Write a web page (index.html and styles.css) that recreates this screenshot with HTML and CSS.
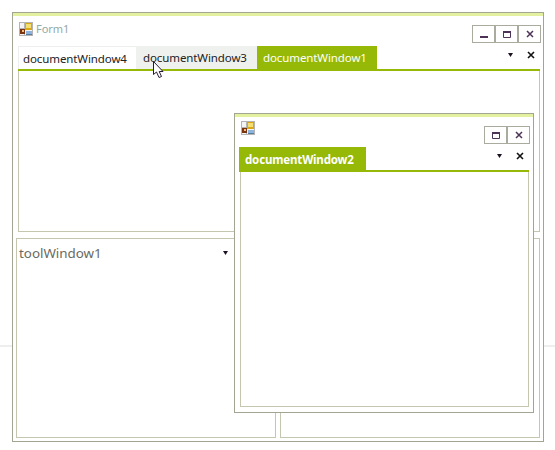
FILE: index.html
```html
<!DOCTYPE html>
<html lang="en">
<head>
<meta charset="utf-8">
<title>Form1</title>
<link rel="stylesheet" href="styles.css">
</head>
<body>
<svg width="0" height="0" class="defs">
  <defs>
    <symbol id="app" viewBox="0 0 14 14">
      <rect x="0" y="0" width="14" height="14" fill="#b4b4b4"/>
      <rect x="1" y="1" width="12" height="12" fill="#f4f4f4"/>
      <rect x="0" y="6" width="6" height="1" fill="#b4b4b4"/>
      <rect x="5" y="0" width="1" height="7" fill="#b4b4b4"/>
      <rect x="5" y="8" width="1" height="6" fill="#b4b4b4"/>
      <rect x="6" y="1" width="7" height="7" fill="#d8a818"/>
      <rect x="7" y="2" width="5" height="4" fill="#f4e070"/>
      <rect x="1" y="7" width="5" height="5" fill="#7a3410"/>
      <rect x="3" y="8" width="2" height="2" fill="#f0c080"/>
      <rect x="7" y="9" width="6" height="4" fill="#8db4dc"/>
      <rect x="7" y="12" width="6" height="1" fill="#5b7ba0"/>
    </symbol>
    <symbol id="down" viewBox="0 0 5 4"><path d="M0 0H5L2.5 4Z" fill="#1c1224"/></symbol>
    <symbol id="close" viewBox="0 0 8 8"><path d="M1 1L7 7M7 1L1 7" stroke="#111" stroke-width="1.6" fill="none"/></symbol>
    <symbol id="wclose" viewBox="0 0 8 8"><path d="M1 1L7 7M7 1L1 7" stroke="#4d3356" stroke-width="1.5" fill="none"/></symbol>
    <symbol id="wmax" viewBox="0 0 8 7"><path d="M.5 .5H7.5V6.5H.5Z" stroke="#4d3356" fill="none"/><rect width="8" height="2" fill="#4d3356"/></symbol>
    <symbol id="wmin" viewBox="0 0 8 2"><rect width="8" height="2" fill="#4d3356"/></symbol>
  </defs>
</svg>
<div class="page-line"></div>
<main class="form">
  <div class="strip"></div>
  <header class="titlebar">
    <div class="title">
      <svg class="app-icon"><use href="#app"/></svg>
      <span class="title-text">Form1</span>
    </div>
    <div class="winbtns">
      <button class="winbtn"><svg class="i-min"><use href="#wmin"/></svg></button>
      <button class="winbtn"><svg class="i-max"><use href="#wmax"/></svg></button>
      <button class="winbtn"><svg class="i-close"><use href="#wclose"/></svg></button>
    </div>
  </header>

  <section class="docs">
    <div class="tabstrip">
      <div class="tab tab-first">documentWindow4</div>
      <div class="tab tab-hover">documentWindow3</div>
      <div class="tab tab-active">documentWindow1</div>
      <div class="strip-tools">
        <svg class="i-down"><use href="#down"/></svg>
        <svg class="i-x"><use href="#close"/></svg>
      </div>
    </div>
    <div class="doc-body"></div>
  </section>

  <div class="tools">
    <section class="tool">
      <div class="tool-head">
        <span>toolWindow1</span>
        <svg class="i-down"><use href="#down"/></svg>
      </div>
    </section>
    <section class="tool"></section>
  </div>

  <section class="float">
    <div class="strip"></div>
    <header class="titlebar float-bar">
      <svg class="app-icon"><use href="#app"/></svg>
      <div class="winbtns">
        <button class="winbtn"><svg class="i-max"><use href="#wmax"/></svg></button>
        <button class="winbtn"><svg class="i-close"><use href="#wclose"/></svg></button>
      </div>
    </header>
    <div class="tabstrip float-strip">
      <div class="tab tab-active tab-bold">documentWindow2</div>
      <div class="strip-tools">
        <svg class="i-down"><use href="#down"/></svg>
        <svg class="i-x"><use href="#close"/></svg>
      </div>
    </div>
    <div class="doc-body float-body"></div>
  </section>
</main>
<svg class="cursor" viewBox="0 0 13 18" width="13" height="18">
  <path d="M.5 .5V13.5L3.5 11L6 16.5L8.5 15.5L6.2 10.5H10Z" fill="#fff" stroke="#2a1a3a" stroke-width="1"/>
</svg>
</body>
</html>
```

FILE: styles.css
```css
* { box-sizing: border-box; }
html, body { margin: 0; height: 450px; background: #fff; overflow: hidden; }
body {
  position: relative;
  padding: 12px 0 0 12px;
  font-family: "Noto Sans", "Open Sans", sans-serif;
}
.defs { position: absolute; }
.page-line { position: absolute; left: 0; right: 0; top: 345px; height: 2px; background: #eeeeee; }

.form {
  position: relative;
  width: 532px;
  height: 430px;
  border: 1px solid #a3a593;
  background: #fff;
  display: flex;
  flex-direction: column;
}
.strip { height: 3px; background: #e2f0a0; flex: none; }

.titlebar {
  height: 30px;
  display: flex;
  justify-content: space-between;
  align-items: flex-start;
  padding: 0 2px 0 6px;
  flex: none;
}
.title { display: flex; align-items: center; gap: 3px; padding-top: 5px; }
.app-icon { width: 14px; height: 14px; display: block; flex: none; }
.title-text { font-size: 11px; line-height: 16px; color: #93aaa8; letter-spacing: -0.05px; }

.winbtns { display: flex; margin-top: 9px; }
.winbtn {
  width: 23px; height: 18px; padding: 0;
  background: #fff;
  border: 1px solid #a8ab9e;
  display: flex; align-items: center; justify-content: center;
}
.i-min { width: 8px; height: 2px; margin-top: 5px; display: block; }
.i-max { width: 8px; height: 7px; display: block; }
.i-close { width: 8px; height: 8px; display: block; }

.docs { margin-left: 5px; width: 522px; flex: none; }
.tabstrip {
  display: flex;
  height: 25px;
  border-bottom: 2px solid #96b807;
  position: relative;
}
.tab {
  height: 23px;
  font-size: 11.5px;
  letter-spacing: -0.1px;
  line-height: 24px;
  color: #222;
  padding-left: 5px;
  white-space: nowrap;
}
.tab-first { width: 118px; border: 1px solid #eeeeee; border-width: 1px 0 0 1px; line-height: 23px; padding-left: 4px; }
.tab-hover { width: 121px; background: #eff1ee; padding-left: 7px; }
.tab-active { width: 120px; background: #96b807; color: #fff; padding-left: 6px; }
.tab-bold { width: 127px; font-weight: 700; height: 25px; line-height: 26px; padding-left: 6px; letter-spacing: -0.16px; }

.strip-tools {
  margin-left: auto;
  display: flex;
  align-items: center;
  height: 18px;
  gap: 14px;
  padding-right: 5px;
}
.i-down { width: 5px; height: 4px; display: block; flex: none; }
.i-x { width: 8px; height: 8px; display: block; flex: none; }

.doc-body {
  height: 161px;
  border: 1px solid #c4c6b0;
  border-top: 0;
}

.tools { display: flex; gap: 4px; margin: 6px 0 0 3px; }
.tool { width: 260px; height: 200px; border: 1px solid #c4c6b0; }
.tool-head {
  display: flex;
  justify-content: space-between;
  align-items: center;
  height: 27px;
  padding: 0 47px 0 2px;
  font-size: 13.4px;
  letter-spacing: -0.02px;
  color: #6a6a60;
}

.float {
  position: absolute;
  left: 221px;
  top: 100px;
  width: 300px;
  height: 300px;
  border: 1px solid #a3a593;
  background: #fff;
  display: flex;
  flex-direction: column;
}
.float-bar { padding: 4px 3px 0 6px; }
.float-bar .winbtns { margin-top: 5px; }
.float-strip { margin: 0 4px 0 4px; height: 25px; }
.float-strip .strip-tools { padding-right: 5px; }
.float-body { margin: 0 4px 5px 5px; flex: 1; height: auto; }

.cursor { position: absolute; left: 153px; top: 61px; }
```
